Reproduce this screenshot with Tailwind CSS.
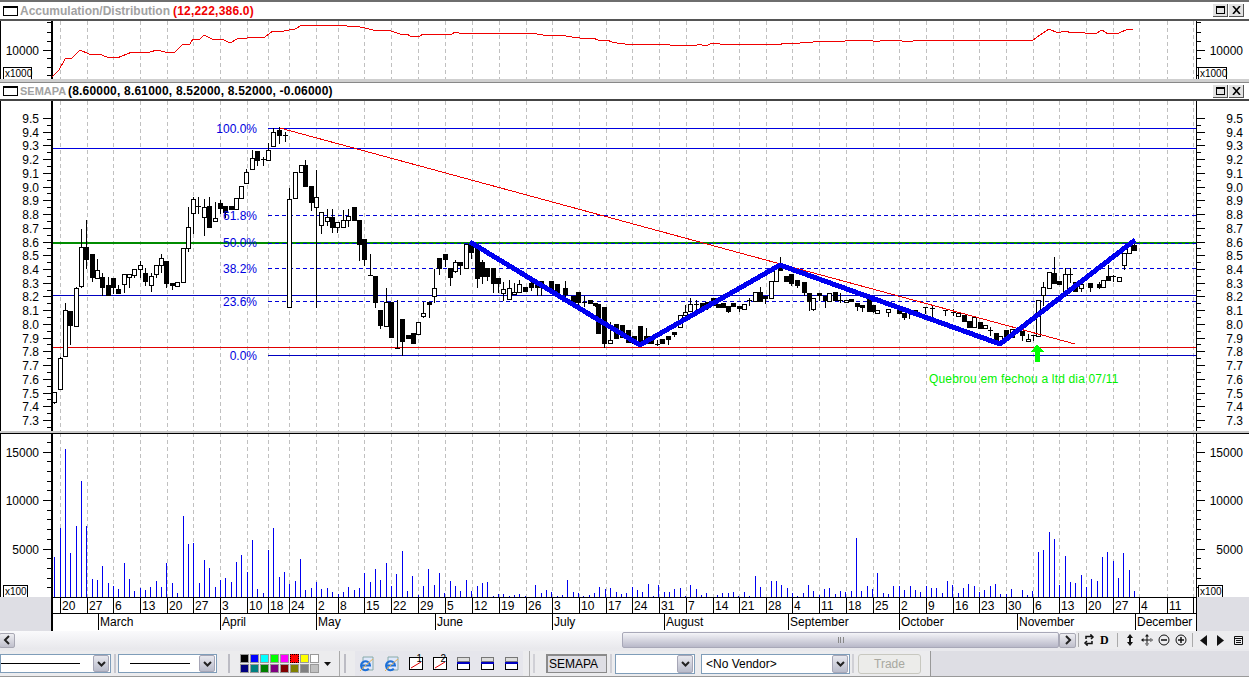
<!DOCTYPE html>
<html lang="en">
<head>
  <meta charset="UTF-8">
  <title>SEMAPA chart</title>
  <script src="https://cdn.jsdelivr.net/npm/@tailwindcss/browser@4"></script>
</head>
<body class="w-[1249px] h-[677px] overflow-hidden bg-[#dedee4] font-['Liberation_Sans',sans-serif] text-black">
  <div class="flex flex-col w-[1249px] h-[677px]">

    <!-- Accumulation/Distribution pane -->
    <div class="h-[21px] bg-white border-t-2 border-t-[#6e6e6e] border-b-2 border-b-[#555] flex items-center pl-[3px] pr-[5px] shrink-0">
      <div class="w-[15px] h-[10px] border border-black border-t-2 mr-[2px]"></div>
      <span class="text-[12px] font-bold text-[#a2a2a2]">Accumulation/Distribution</span>
      <span class="text-[12px] font-bold text-[#f00000] ml-[3px] tracking-[0.2px]">(12,222,386.0)</span>
      <div class="ml-auto flex gap-[1px]">
        <div class="w-[15px] h-[13px] bg-[#e2e2e2] border-r border-b border-[#555] flex items-center justify-center"><div class="w-[9px] h-[8px] border border-black border-t-2"></div></div>
        <div class="w-[15px] h-[13px] bg-[#e2e2e2] border-r border-b border-[#555] flex items-center justify-center"><svg width="9" height="8" viewBox="0 0 9 8"><path d="M1 0L8 8M8 0L1 8" stroke="#000" stroke-width="1.6"/></svg></div>
      </div>
    </div>
    <svg id="adPane" class="block shrink-0 bg-white" width="1249" height="58" viewBox="0 21 1249 58"></svg>
    <div class="h-[4px] shrink-0 bg-[#cfcfcf] border-b border-[#888]"></div>

    <!-- price pane -->
    <div class="h-[18px] bg-white border-b-2 border-b-[#444] flex items-center pl-[3px] pr-[5px] shrink-0">
      <div class="w-[15px] h-[10px] border border-black border-t-2 mr-[2px]"></div>
      <span class="text-[11px] font-bold text-[#a2a2a2] w-[46px]">SEMAPA</span>
      <span class="text-[12px] font-bold text-black ml-[2px] tracking-[0.2px]">(8.60000, 8.61000, 8.52000, 8.52000, -0.06000)</span>
      <div class="ml-auto flex gap-[1px]">
        <div class="w-[15px] h-[13px] bg-[#e2e2e2] border-r border-b border-[#555] flex items-center justify-center"><div class="w-[9px] h-[8px] border border-black border-t-2"></div></div>
        <div class="w-[15px] h-[13px] bg-[#e2e2e2] border-r border-b border-[#555] flex items-center justify-center"><svg width="9" height="8" viewBox="0 0 9 8"><path d="M1 0L8 8M8 0L1 8" stroke="#000" stroke-width="1.6"/></svg></div>
      </div>
    </div>
    <svg id="pricePane" class="block shrink-0 bg-white" width="1249" height="330" viewBox="0 101 1249 330"></svg>
    <div class="h-[2px] shrink-0 bg-[#c8c8c8]"></div>

    <!-- volume pane -->
    <svg id="volumePane" class="block shrink-0 bg-white" width="1249" height="164" viewBox="0 433 1249 164"></svg>

    <!-- date axis -->
    <div class="h-[34px] shrink-0 flex">
      <div class="w-[51px] bg-[#dedee4]"></div>
      <svg id="dateAxis" class="block bg-white" width="1146" height="34" viewBox="51 597 1146 34"></svg>
      <div class="flex-1 bg-[#dedee4]"></div>
    </div>

    <!-- scrollbar row -->
    <div class="h-[18px] shrink-0 flex items-center bg-gradient-to-b from-[#fafafc] to-[#e8e8ec]">
      <div class="w-[16px] h-[15px] ml-[-1px] rounded-[2px] border border-[#a8a8b4] bg-gradient-to-b from-[#eeeef2] to-[#c0c0cc] flex items-center justify-center">
        <svg width="8" height="10" viewBox="0 0 8 10"><path d="M6 1L2 5L6 9" fill="none" stroke="#222" stroke-width="2"/></svg>
      </div>
      <div class="w-[607px]"></div>
      <div class="w-[437px] h-[16px] rounded-[2px] border border-[#a8a8b8] bg-gradient-to-b from-[#f4f4f8] to-[#b9b9c9] flex items-center justify-center">
        <div class="w-[6px] h-[6px] border-x border-[#888] flex justify-center"><div class="w-px h-full bg-[#888]"></div></div>
      </div>
      <div class="w-[17px] h-[15px] rounded-[2px] border border-[#a8a8b4] bg-gradient-to-b from-[#eeeef2] to-[#c0c0cc] flex items-center justify-center">
        <svg width="8" height="10" viewBox="0 0 8 10"><path d="M2 1L6 5L2 9" fill="none" stroke="#222" stroke-width="2"/></svg>
      </div>
      <div class="flex-1 h-full flex items-center bg-[#ececee] relative">
        <div class="w-px h-[14px] bg-[#aaa] ml-[2px]"></div>
        <svg class="ml-[4px]" width="12" height="12" viewBox="0 0 12 12"><path d="M3 5V2.5H8V1L10 3L8 5M9 7V9.5H4V11L2 9L4 7" fill="none" stroke="#111" stroke-width="1.5"/></svg>
        <span class="ml-[5px] w-[12px] text-[12px] leading-none font-bold font-['Liberation_Serif',serif]">D</span>
        <div class="w-px h-[14px] bg-[#aaa] ml-[5px]"></div>
        <svg class="ml-[6px]" width="12" height="12" viewBox="0 0 12 12"><path d="M6 0L9 4H3ZM6 12L9 8H3ZM5 4H7V8H5Z" fill="#111"/></svg>
        <svg class="ml-[5px]" width="12" height="12" viewBox="0 0 12 12"><path d="M6 0L8 2.500H4ZM6 12L8 9.500H4ZM0 6L2.500 4V8ZM12 6L9.500 4V8Z M1 5.500H11V6.500H1ZM5.500 1H6.500V11H5.500Z" fill="#111"/></svg>
        <svg class="ml-[5px]" width="12" height="12" viewBox="0 0 12 12"><circle cx="6" cy="6" r="5" fill="none" stroke="#111"/><path d="M3 6H9" stroke="#111" stroke-width="1.500"/></svg>
        <svg class="ml-[5px]" width="12" height="12" viewBox="0 0 12 12"><circle cx="6" cy="6" r="5" fill="none" stroke="#111"/><path d="M3 6H9M6 3V9" stroke="#111" stroke-width="1.500"/></svg>
        <div class="w-px h-[14px] bg-[#aaa] ml-[5px]"></div>
        <svg class="ml-[6px]" width="9" height="11" viewBox="0 0 9 11"><path d="M8 0V11L1 5.500Z" fill="#111"/></svg>
        <svg class="ml-[8px]" width="9" height="11" viewBox="0 0 9 11"><path d="M1 0V11L8 5.500Z" fill="#111"/></svg>
        <svg class="ml-[8px]" width="11" height="11" viewBox="0 0 11 11"><path d="M1.500 1.500H9.500V9.500H1.500ZM1.500 3.500H9.500M3 5.500H8M3 7.500H8" fill="none" stroke="#111"/></svg>
      </div>
    </div>

    <!-- bottom toolbar -->
    <div class="flex-1 flex items-center bg-[#dedee4] border-t-[2px] border-t-[#e9e9ed] border-b border-b-[#999]">
      <div class="flex items-center h-[25px] w-[930px] bg-[#ececee]">

        <!-- line style combos -->
        <div class="w-[111px] h-[19px] bg-white border border-[#7f9db9] flex items-center justify-between pr-px">
          <div class="w-[79px] h-px bg-black"></div>
          <div class="w-[16px] h-[17px] rounded-[2px] bg-gradient-to-b from-[#e8e8ee] to-[#b9bccb] border border-[#a6a6b6] flex items-center justify-center"><svg width="9" height="6" viewBox="0 0 9 6"><path d="M1 1L4.500 4.500L8 1" fill="none" stroke="#222" stroke-width="2"/></svg></div>
        </div>
        <div class="w-[2px] h-[19px] bg-[#c8c8d0] ml-[3px]"></div>
        <div class="w-[99px] h-[19px] ml-[2px] bg-white border border-[#7f9db9] flex items-center justify-between pl-[11px] pr-px">
          <div class="w-[60px] h-px bg-black"></div>
          <div class="w-[16px] h-[17px] rounded-[2px] bg-gradient-to-b from-[#e8e8ee] to-[#b9bccb] border border-[#a6a6b6] flex items-center justify-center"><svg width="9" height="6" viewBox="0 0 9 6"><path d="M1 1L4.500 4.500L8 1" fill="none" stroke="#222" stroke-width="2"/></svg></div>
        </div>
        <div class="w-[2px] h-[19px] bg-[#bcbcc4] ml-[11px]"></div>

        <!-- colour palette -->
        <div class="grid grid-cols-8 gap-[1px] ml-[10px] w-[79px]">
          <div class="w-[9px] h-[9px] border border-[#999] bg-[#000000]"></div>
          <div class="w-[9px] h-[9px] border border-[#999] bg-[#0000ff]"></div>
          <div class="w-[9px] h-[9px] border border-[#999] bg-[#00ffff]"></div>
          <div class="w-[9px] h-[9px] border border-[#999] bg-[#00ff00]"></div>
          <div class="w-[9px] h-[9px] border border-[#999] bg-[#ff00ff]"></div>
          <div class="w-[9px] h-[9px] border border-dotted border-black bg-[#ff0000]"></div>
          <div class="w-[9px] h-[9px] border border-[#999] bg-[#ffff00]"></div>
          <div class="w-[9px] h-[9px] border border-[#999] bg-[#ffffff]"></div>
          <div class="w-[9px] h-[9px] border border-[#999] bg-[#000080]"></div>
          <div class="w-[9px] h-[9px] border border-[#999] bg-[#008080]"></div>
          <div class="w-[9px] h-[9px] border border-[#999] bg-[#008000]"></div>
          <div class="w-[9px] h-[9px] border border-[#999] bg-[#800080]"></div>
          <div class="w-[9px] h-[9px] border border-[#999] bg-[#800000]"></div>
          <div class="w-[9px] h-[9px] border border-[#999] bg-[#808000]"></div>
          <div class="w-[9px] h-[9px] border border-[#999] bg-[#808080]"></div>
          <div class="w-[9px] h-[9px] border border-[#999] bg-[#c0c0c0]"></div>
        </div>
        <svg class="ml-[5px]" width="7" height="4" viewBox="0 0 7 4"><path d="M0 0H7L3.500 4Z" fill="#111"/></svg>
        <div class="w-px h-[25px] bg-[#aaa] ml-[8px]"></div>
        <div class="w-[2px] h-[19px] bg-[#bcbcc4] ml-[4px]"></div>

        <!-- browser and window icons -->
        <div class="flex items-center h-[25px] w-[168px] ml-[9px] bg-[#e6e6ec]">
          <svg class="ml-[4px]" width="16" height="16" viewBox="0 0 16 16"><path d="M4 1H14V14H4Z" fill="#dfe8fb" stroke="#8aa"/><path d="M3 9.500H11A4.500 4.500 0 1 0 9.800 12.800" fill="none" stroke="#1c6fd8" stroke-width="2"/><path d="M1 15C4 12 10 6 14 3" fill="none" stroke="#e8b050"/></svg>
          <svg class="ml-[9px]" width="16" height="16" viewBox="0 0 16 16"><path d="M4 1H14V14H4Z" fill="#dfe8fb" stroke="#8aa"/><path d="M3 9.500H11A4.500 4.500 0 1 0 9.800 12.800" fill="none" stroke="#1c6fd8" stroke-width="2"/><path d="M1 15C4 12 10 6 14 3" fill="none" stroke="#e8b050"/></svg>
          <div class="relative ml-[9px] w-[14px] h-[13px] border border-black bg-white"><svg class="absolute left-0 top-0" width="12" height="11" viewBox="0 0 12 11"><path d="M1 10L11 4" stroke="#e00000"/></svg><span class="absolute right-0 top-[-4px] text-[10px] leading-none">1</span></div>
          <div class="relative ml-[10px] w-[14px] h-[13px] border border-black bg-white"><svg class="absolute left-0 top-0" width="12" height="11" viewBox="0 0 12 11"><path d="M1 10L11 4" stroke="#e00000"/></svg><span class="absolute right-0 top-[-4px] text-[10px] leading-none">2</span></div>
          <div class="ml-[10px] w-[13px] h-[13px] flex flex-col"><div class="h-[5px] border border-[#777] bg-[#ddd]"></div><div class="h-[2px] bg-[#0000c0]"></div><div class="flex-1 border border-black border-t-0 bg-white"></div></div>
          <div class="ml-[11px] w-[13px] h-[13px] flex flex-col"><div class="h-[5px] border border-[#777] bg-[#ddd]"></div><div class="h-[2px] bg-[#0000c0]"></div><div class="flex-1 border border-black border-t-0 bg-white"></div></div>
          <div class="ml-[11px] w-[13px] h-[13px] flex flex-col"><div class="h-[5px] border border-[#777] bg-[#ddd]"></div><div class="h-[2px] bg-[#0000c0]"></div><div class="flex-1 border border-black border-t-0 bg-white"></div></div>
        </div>
        <div class="w-px h-[25px] bg-[#aaa] ml-[6px]"></div>
        <div class="w-[2px] h-[19px] bg-[#d0d0d6] ml-[3px]"></div>

        <!-- symbol, vendor, trade -->
        <div class="ml-[11px] w-[61px] h-[19px] bg-[#dedee4] border border-[#8a8a8a] border-t-2 border-l-2 flex items-center pl-px text-[12px] leading-none">SEMAPA</div>
        <div class="w-[2px] h-[19px] bg-[#d0d0d6] ml-[3px]"></div>
        <div class="ml-[3px] w-[80px] h-[20px] bg-white border border-[#7f9db9] flex items-center justify-end pr-px">
          <div class="w-[16px] h-[18px] rounded-[2px] bg-gradient-to-b from-[#e8e8ee] to-[#b9bccb] border border-[#a6a6b6] flex items-center justify-center"><svg width="9" height="6" viewBox="0 0 9 6"><path d="M1 1L4.500 4.500L8 1" fill="none" stroke="#222" stroke-width="2"/></svg></div>
        </div>
        <div class="ml-[6px] w-[149px] h-[20px] bg-white border border-[#7f9db9] flex items-center justify-between pl-[4px] pr-px text-[12px]">
          <span>&lt;No Vendor&gt;</span>
          <div class="w-[16px] h-[18px] rounded-[2px] bg-gradient-to-b from-[#e8e8ee] to-[#b9bccb] border border-[#a6a6b6] flex items-center justify-center"><svg width="9" height="6" viewBox="0 0 9 6"><path d="M1 1L4.500 4.500L8 1" fill="none" stroke="#222" stroke-width="2"/></svg></div>
        </div>
        <div class="w-[2px] h-[19px] bg-[#d0d0d6] ml-[2px]"></div>
        <div class="ml-[4px] w-[63px] h-[20px] rounded-[3px] border border-[#c8c8c0] bg-[#ececea] flex items-center justify-center text-[12px] text-[#a8a8a0]">Trade</div>
      </div>
      <div class="w-px h-[25px] bg-[#999]"></div>
    </div>
  </div>

  <script>
    const ticks = [60,87,113,140,167,193,220,247,268,289,316,338,364,391,418,445,472,499,526,552,579,606,632,659,686,713,739,766,792,819,846,873,899,926,953,979,1006,1033,1059,1086,1113,1139,1167,1193];
    const tickLabels = [20,27,6,13,20,27,3,10,18,24,2,8,15,22,29,5,12,19,26,3,10,17,24,31,7,14,21,28,4,11,18,25,2,9,16,23,30,6,13,20,27,4,11,''];
    const months = [[98,'March'],[220,'April'],[316,'May'],[435,'June'],[552,'July'],[664,'August'],[788,'September'],[899,'October'],[1017,'November'],[1135,'December']];

    const line = (x1, y1, x2, y2, color, w = 1, dash = '') =>
      `<line x1="${x1}" y1="${y1}" x2="${x2}" y2="${y2}" stroke="${color}" stroke-width="${w}" ${dash ? `stroke-dasharray="${dash}"` : ''} shape-rendering="crispEdges"/>`;
    const text = (x, y, s, color = '#000', anchor = 'start', extra = '') =>
      `<text x="${x}" y="${y}" fill="${color}" font-size="12" text-anchor="${anchor}" dominant-baseline="central" ${extra}>${s}</text>`;
    const badge = (x, y, w, s) =>
      `<rect x="${x + .5}" y="${y + .5}" width="${w}" height="12" fill="#fff" stroke="#000" shape-rendering="crispEdges"/>` + `<text x="${x + 2}" y="${y + 10}" font-size="10">${s}</text>`;
    const grid = (top, bottom) => ticks.map(x => line(x + .5, top, x + .5, bottom, '#c0c0c0', 1, '4 3')).join('');

    // both vertical axes with major and minor marks
    function axes(top, bottom, marks) {
      let out = line(51.5, top, 51.5, bottom, '#000', 2) + line(1196.5, top, 1196.5, bottom, '#000', 1);
      marks.forEach(([y, major, label]) => {
        out += line(major ? 43 : 47, y + .5, 51, y + .5, '#000') + line(1196, y + .5, major ? 1205 : 1201, y + .5, '#000');
        if (label) out += text(39, y + 1, label, '#000', 'end') + text(1243, y + 1, label, '#000', 'end');
      });
      return out + line(0.5, top, 0.5, bottom, '#000');
    }

    // accumulation / distribution pane
    const adPoints = [[52,77],[59,70],[65,59],[72,58],[80,50],[89,54],[99,54],[107,57],[117,58],[132,52],[150,52],[157,50],[165,52],[175,52],[183,44],[190,44],[193,39],[200,39],[204,35],[212,39],[222,39],[230,43],[237,39],[247,38],[253,37],[265,37],[273,31],[278,32],[295,29],[302,25],[315,26],[345,25],[347,26],[360,27],[365,28],[377,31],[388,30],[400,34],
      [407,34],[410,36],[420,36],[423,34],[452,34],[455,32],[459,33],[467,33],[468,34],[471,33],[503,33],[505,34],[512,33],[535,33],[537,34],[543,35],[557,35],[559,36],[563,35],[566,36],[572,37],[580,38],[593,38],[598,40],[607,40],[612,42],[617,43],[625,44],[668,44],[670,45],[697,45],[698,44],[702,45],[708,45],[712,43],[718,43],[720,44],[777,44],[780,45],[783,43],[795,43],[798,44],[802,42],[813,42],[815,41],[822,42],[828,41],[845,41],[847,40],[863,40],[865,41],[868,40],[873,41],[880,41],[882,40],[890,41],[892,40],[900,40],[902,41],[913,41],[915,40],[1000,40],
      [1008,40],[1033,40],[1040,35],[1049,29],[1058,33],[1065,31],[1072,33],[1080,32],[1090,34],[1097,33],[1102,30],[1108,34],[1119,33],[1128,29],[1133,30]];
    const adMarks = [[22,0],[32,0],[41,0],[50,1,'10000'],[58,0],[67,0],[75,0]];
    document.getElementById('adPane').innerHTML = grid(21, 79) + axes(21, 79, adMarks)
      + `<polyline points="${adPoints.join(' ')}" fill="none" stroke="#f00000" stroke-width="1" shape-rendering="crispEdges"/>`
      + badge(3, 67, 28, 'x1000') + badge(1198, 67, 28, 'x1000');

    // price pane: [x, high, bodyTop, bodyBottom, low, black]
    const candles = [[54,392,392,402,403,0],[60,357,358,389,389,0],[65,303,310,356,356,0],[70,311,311,325,344,1],[76,287,288,326,326,0],[81,229,247,286,287,0],[86,220,247,259,268,1],[92,254,254,277,281,1],[97,259,270,278,278,0],[102,273,277,287,295,1],[108,277,285,295,295,1],[113,278,278,287,293,1],[118,285,289,293,293,1],[124,274,274,284,292,0],[129,274,274,277,287,0],[134,269,269,275,277,0],[140,261,265,269,277,0],[145,268,273,281,285,1],[151,273,276,285,291,0],[156,265,265,274,277,0],[161,254,258,265,272,0],[166,261,261,283,287,1],[172,283,283,285,289,1],[177,282,282,286,286,0],[183,248,248,282,282,0],[188,207,227,248,251,0],[193,197,199,213,233,0],[198,197,206,206,213,1],[204,199,207,217,235,0],[209,197,206,227,227,1],[215,202,218,221,221,0],[220,200,203,208,213,1],[225,206,206,212,217,1],[231,206,206,209,209,1],[236,198,198,209,209,0],[241,186,186,198,198,0],[246,169,172,183,183,0],[252,150,158,169,169,0],[257,151,151,160,165,1],[263,157,159,159,165,1],[268,143,150,160,160,0],[273,128,132,146,146,0],[279,127,130,135,143,1],[285,132,135,135,141,1],
      [289,188,199,307,307,0],[295,172,172,198,198,0],[301,165,165,172,172,0],[305,160,165,186,186,1],[311,186,186,202,210,1],[316,170,197,207,307,0],[321,212,212,225,233,0],[327,209,217,221,225,0],[332,209,217,227,232,1],[337,222,222,227,232,0],[343,210,220,227,227,0],[348,209,216,220,226,0],[354,207,207,220,220,1],[359,220,220,244,260,1],[364,239,239,259,265,1],[370,254,275,275,275,1],[375,276,276,302,307,1],[380,310,310,325,328,1],[386,288,302,326,326,0],[391,302,302,337,337,1],[397,300,348,348,348,1],[402,319,319,341,355,1],[408,335,335,338,338,1],[413,333,333,343,343,1],[418,322,322,334,334,0],[423,302,313,316,317,0],[429,302,302,304,317,1],[434,269,288,296,302,0],[439,258,258,268,274,1],[445,254,254,259,266,1],[450,268,268,277,285,1],[455,260,262,271,272,0],[460,262,262,265,274,1],[466,244,244,268,268,0],[471,244,244,252,258,1],[477,248,248,278,287,1],[482,260,262,276,283,1],[487,268,268,276,280,1],[493,268,268,283,292,1],[498,278,278,283,292,1],[503,282,289,293,300,0],[509,280,288,299,299,0],[514,283,292,294,294,0],[519,280,284,292,292,0],[525,287,287,291,291,1],[531,280,283,287,290,1],[537,283,283,287,295,1],[541,281,281,287,295,1],[551,281,281,290,292,1],[557,284,284,292,297,1],[565,281,288,294,300,1],[573,296,296,302,304,1],[578,292,292,302,304,1],[584,296,302,302,306,1],[590,300,300,303,303,1],[595,303,303,305,306,1],[598,304,304,333,333,1],[604,307,307,343,347,1],[610,322,340,343,343,0],[616,324,324,338,338,1],[622,325,325,337,337,1],[628,330,330,342,342,1],[634,336,336,343,343,1],[640,326,326,345,345,1],[646,328,336,343,343,1],[651,336,336,343,343,1],[657,340,344,344,345,1],[662,339,339,343,343,1],[668,336,336,339,344,1],[674,332,332,334,336,1],
      [680,315,315,327,327,0],[685,305,312,315,318,0],[690,298,304,311,311,0],[696,300,304,304,310,1],[702,303,303,308,308,1],[707,302,302,307,309,1],[713,298,298,305,305,1],[718,304,304,307,307,1],[723,303,303,307,307,1],[728,306,306,311,312,1],[733,303,303,306,306,1],[739,306,306,308,311,1],[744,304,304,309,309,0],[749,298,300,300,305,1],[755,292,292,301,301,0],[760,287,292,301,301,1],[765,296,296,298,303,1],[771,281,281,298,298,0],[776,268,268,281,281,0],[780,257,265,270,270,1],[786,276,276,281,281,1],[791,274,274,283,285,1],[797,280,280,285,287,1],[804,282,282,292,295,1],[809,293,293,301,310,1],[813,298,298,309,310,0],[819,293,293,295,300,1],[825,296,296,300,307,1],[829,293,293,301,301,0],[835,292,292,300,300,1],[840,293,300,300,302,1],[846,300,300,302,302,0],[851,299,299,301,301,1],[857,303,303,306,310,1],[862,305,305,307,311,1],[869,297,297,311,311,1],[873,305,305,311,312,1],[877,310,310,313,313,0],[888,309,309,312,316,0],[899,308,308,313,313,1],[904,313,313,317,319,1],[909,311,311,311,318,1],[915,310,310,312,314,0],[925,307,307,307,313,1],[932,305,308,308,318,1],[945,310,310,310,315,1],[953,309,312,312,315,1],[958,313,313,316,316,0],[964,315,315,321,321,1],[969,321,321,327,327,1],[974,317,317,327,327,0],[980,322,322,328,328,1],[985,325,325,328,328,0],[990,327,330,330,335,1],[996,333,333,341,341,1],[1000,336,336,343,343,0],[1006,330,330,340,340,1],[1012,329,329,337,337,0],[1022,331,331,335,340,1],[1028,334,339,341,341,0],[1033,335,335,335,340,1],[1038,300,300,336,336,0],[1043,282,287,295,305,0],[1049,272,272,288,288,0],[1054,257,273,283,283,1],[1059,281,281,284,284,1],[1065,268,274,295,295,0],[1070,268,274,274,282,1],[1075,282,282,291,291,1],[1081,284,284,288,291,0],[1090,283,283,287,291,1],[1099,282,284,287,288,1],[1103,280,280,287,287,0],[1108,265,276,280,280,1],[1113,275,276,276,281,1],[1119,277,277,281,281,0],[1124,253,253,265,269,0],[1129,245,245,253,253,0],[1134,240,245,250,250,1]];
    const candleMarkup = candles.map(([x, high, top, bottom, low, black]) => {
      const wick = line(x + .5, high, x + .5, low + 1, '#000');
      if (top === bottom) return wick + line(x - 2, top + .5, x + 3, top + .5, '#000');
      return wick + `<rect x="${x - 1.5}" y="${top + .5}" width="4" height="${bottom - top}" fill="${black ? '#000' : '#fff'}" stroke="#000" shape-rendering="crispEdges"/>`;
    }).join('');

    const priceMarks = [];
    for (let i = 0; i <= 45; i++) {
      const y = Math.round(420 - (i - 1) * 6.865);
      const major = (i - 1) % 2 === 0;
      const value = 7.3 + (i - 1) * 0.05;
      priceMarks.push([y, major, major && value < 9.55 ? value.toFixed(1) : '']);
    }
    const priceMarksKept = priceMarks.filter(m => m[0] > 102);

    const fibLabel = (y, s) => text(257, y, s, '#0000e0', 'end');
    document.getElementById('pricePane').innerHTML = grid(101, 431)
      + line(268, 128.5, 1196, 128.5, '#0000e0')
      + line(52, 148.5, 1196, 148.5, '#0000e0')
      + line(268, 215.5, 1196, 215.5, '#0000d8', 1, '4 3')
      + line(52, 243, 1196, 243, '#008c00', 2)
      + line(268, 243.5, 1196, 243.5, '#0000e0', 1, '4 3')
      + line(268, 268.5, 1196, 268.5, '#0000e0', 1, '4 3')
      + line(52, 295.5, 1196, 295.5, '#0000c0')
      + line(268, 301.5, 1196, 301.5, '#0000d8', 1, '4 3')
      + line(52, 347.5, 1196, 347.5, '#e00000')
      + line(268, 355.5, 1196, 355.5, '#0000c0')
      + candleMarkup
      + `<line x1="280" y1="128" x2="1075" y2="344" stroke="#f00000" stroke-width="1" shape-rendering="crispEdges"/>`
      + `<polyline points="470,242 640,345 780,265 1000,344 1135,240" fill="none" stroke="#0000f0" stroke-width="5" stroke-linejoin="round" shape-rendering="crispEdges"/>`
      + axes(101, 431, priceMarksKept)
      + fibLabel(129, '100.0%') + fibLabel(216, '61.8%') + fibLabel(243, '50.0%') + fibLabel(269, '38.2%') + fibLabel(302, '23.6%') + fibLabel(356, '0.0%')
      + `<polygon points="1037,344 1044,352 1040,352 1040,362 1035,362 1035,352 1031,352" fill="#00ff00" shape-rendering="crispEdges"/>`
      + text(929, 379, 'Quebrou em fechou a ltd dia 07/11', '#00f000', 'start', 'letter-spacing="0.17"');

    // volume pane: zoomed reference pixels, x and top of each bar
    const volA = [[163,382],[181,293],[196,57],[211,370],[229,288],[244,153],[259,288],[277,447],[292,450],[307,408],[325,459],[340,468],[355,477],[373,399],[388,447],[403,483],[421,474],[436,480],[451,471],[469,453],[484,471],[499,399],[517,459],[532,489],[550,258],[565,342],[580,339],[598,459],[613,390],[628,414],[646,471],[661,450],[676,444],[694,456],[709,396],[724,375],[742,426],[757,330],[772,477],[790,489],[805,360],[820,294],[838,441],[853,426],[868,462],[886,453],[901,387],[916,480],[934,474],[949,456],[964,477],[982,474],[997,486],[1015,492],[1030,486],[1045,471],[1063,480],[1078,474],[1093,429],[1111,456],[1126,417],[1141,450],[1159,399],[1174,468],[1189,432],[1207,363],[1222,483],[1237,438],[1255,495]];
    const volB = [[10,258],[25,207],[43,255],[58,219],[73,279],[91,243],[106,258],[121,273],[139,240],[154,273],[172,258],[187,249],[202,246],[220,288],[235,282],[250,282],[268,288],[283,285],[298,282],[316,288],[346,255],[364,279],[379,270],[394,276],[412,288],[427,285],[442,240],[460,276],[475,279],[490,288],[508,285],[523,279],[538,261],[556,267],[571,264],[589,276],[604,282],[619,279],[637,261],[652,270],[667,276],[685,252],[700,288],[715,255],[733,276],[748,276],[763,267],[781,264],[796,288],[811,255],[829,267],[844,285],[859,279],[892,285],[907,279],[925,279],[940,276],[955,288],[973,276],[988,288],[1006,228],[1021,261],[1054,243],[1069,243],[1084,255],[1102,264],[1117,279],[1132,288],[1150,279],[1165,255],[1180,273],[1198,285]];
    const volC = [[13,267],[28,264],[46,282],[61,273],[76,276],[94,273],[109,114],[124,273],[142,258],[157,267],[172,219],[190,279],[205,282],[220,258],[238,258],[253,270],[271,258],[286,270],[301,276],[319,258],[334,264],[349,264],[367,279],[382,243],[397,255],[415,279],[430,264],[445,252],[463,258],[478,276],[493,270],[511,258],[526,252],[541,282],[559,282],[574,267],[607,270],[622,285],[637,273],[655,156],[670,150],[688,96],[703,117],[718,255],[736,168],[751,246],[766,249],[784,225],[799,261],[814,237],[832,243],[847,171],[862,156],[880,183],[895,234],[910,159],[928,210],[943,273]];
    const bars = volA.map(([x, t]) => [Math.floor(x / 3), 430 + Math.round(t / 3)])
      .concat(volB.map(([x, t]) => [420 + Math.floor(x / 3), 500 + Math.round(t / 3)]))
      .concat(volC.map(([x, t]) => [820 + Math.floor(x / 3), 500 + Math.round(t / 3)]));

    const volMarks = [];
    for (let i = 0; i <= 16; i++) {
      const label = { 5: '5000', 10: '10000', 15: '15000' }[i] || '';
      volMarks.push([Math.round(597 - i * 9.7), i % 5 === 0, label]);
    }
    document.getElementById('volumePane').innerHTML = grid(433, 597)
      + bars.map(([x, y]) => line(x + .5, y, x + .5, 597, '#0000f0')).join('')
      + axes(433, 597, volMarks.filter(m => m[0] > 434 && m[0] < 596))
      + line(0, 433.5, 1249, 433.5, '#000')
      + badge(3, 585, 24, 'x100') + badge(1198, 585, 24, 'x100');

    // date axis rows
    let dates = line(51, 597.5, 1197, 597.5, '#000') + line(51, 613.5, 1197, 613.5, '#000') + line(51.5, 597, 51.5, 631, '#000', 2) + line(1196.5, 597, 1196.5, 631, '#000', 1);
    ticks.forEach((x, i) => {
      dates += line(x + .5, 590, x + .5, 613, '#000');
      if (tickLabels[i] !== '') dates += text(x + 2, 605.5, tickLabels[i]);
    });
    months.forEach(([x, s]) => {
      dates += line(x + .5, 613, x + .5, 630, '#000') + text(x + 2, 622, s);
    });
    document.getElementById('dateAxis').innerHTML = dates;
  </script>
</body>
</html>
